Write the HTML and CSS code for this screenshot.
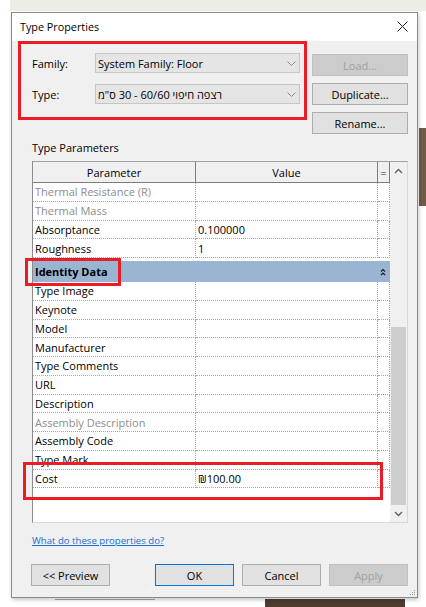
FILE: index.html
```html
<!DOCTYPE html>
<html>
<head>
<meta charset="utf-8">
<title>Type Properties</title>
<link rel="stylesheet" href="styles.css">
</head>
<body>
<div class="desk">
  <div class="strip-top"></div>
  <div class="brown-right"></div>
  <div class="brown-bottom"></div>
  <div class="line-bottom"></div>

  <div class="dialog">
    <div class="titlebar">
      <span class="title">Type Properties</span>
      <svg class="close" width="11" height="11" viewBox="0 0 11 11"><path d="M0.5 0.5 L10.5 10.5 M10.5 0.5 L0.5 10.5" stroke="#1a1a1a" stroke-width="1" fill="none"/></svg>
    </div>
    <div class="dbody">
      <div class="top">
        <div class="fields">
          <div class="field">
            <span class="lbl">Family:</span>
            <div class="combo"><span class="ctext">System Family: Floor</span><svg class="chev" width="9" height="5" viewBox="0 0 9 5"><path d="M0.5 0.5 L4.5 4.5 L8.5 0.5" fill="none" stroke="#8a8a8a" stroke-width="1"/></svg></div>
          </div>
          <div class="field">
            <span class="lbl">Type:</span>
            <div class="combo"><span class="ctext" dir="rtl">רצפה חיפוי 60/60 - 30 ס"מ</span><svg class="chev" width="9" height="5" viewBox="0 0 9 5"><path d="M0.5 0.5 L4.5 4.5 L8.5 0.5" fill="none" stroke="#8a8a8a" stroke-width="1"/></svg></div>
          </div>
        </div>
        <div class="side">
          <button class="btn disabled">Load...</button>
          <button class="btn">Duplicate...</button>
          <button class="btn">Rename...</button>
        </div>
      </div>

      <div class="section-label">Type Parameters</div>

      <div class="grid">
        <div class="table">
          <div class="row head"><div class="c c1">Parameter</div><div class="c c2">Value</div><div class="c c3">=</div></div>
          <div class="row"><div class="c c1 dim">Thermal Resistance (R)</div><div class="c c2"></div><div class="c c3"></div></div>
          <div class="row"><div class="c c1 dim">Thermal Mass</div><div class="c c2"></div><div class="c c3"></div></div>
          <div class="row"><div class="c c1">Absorptance</div><div class="c c2">0.100000</div><div class="c c3"></div></div>
          <div class="row"><div class="c c1">Roughness</div><div class="c c2">1</div><div class="c c3"></div></div>
          <div class="group"><span>Identity Data</span><svg class="gicon" width="6" height="8" viewBox="0 0 6 8"><path d="M1 3.5 L3 1.5 L5 3.5 M1 7 L3 5 L5 7" fill="none" stroke="#1e1e1e" stroke-width="1.2"/></svg></div>
          <div class="row"><div class="c c1">Type Image</div><div class="c c2"></div><div class="c c3"></div></div>
          <div class="row"><div class="c c1">Keynote</div><div class="c c2"></div><div class="c c3"></div></div>
          <div class="row"><div class="c c1">Model</div><div class="c c2"></div><div class="c c3"></div></div>
          <div class="row"><div class="c c1">Manufacturer</div><div class="c c2"></div><div class="c c3"></div></div>
          <div class="row"><div class="c c1">Type Comments</div><div class="c c2"></div><div class="c c3"></div></div>
          <div class="row"><div class="c c1">URL</div><div class="c c2"></div><div class="c c3"></div></div>
          <div class="row"><div class="c c1">Description</div><div class="c c2"></div><div class="c c3"></div></div>
          <div class="row"><div class="c c1 dim">Assembly Description</div><div class="c c2"></div><div class="c c3"></div></div>
          <div class="row"><div class="c c1">Assembly Code</div><div class="c c2"></div><div class="c c3"></div></div>
          <div class="row"><div class="c c1">Type Mark</div><div class="c c2"></div><div class="c c3"></div></div>
          <div class="row"><div class="c c1">Cost</div><div class="c c2">₪100.00</div><div class="c c3"></div></div>
          <div class="fill"></div>
        </div>
        <div class="scroll">
          <div class="arrow up"><svg width="9" height="6" viewBox="0 0 9 6"><path d="M1 5 L4.5 1.5 L8 5" fill="none" stroke="#606060" stroke-width="1.4"/></svg></div>
          <div class="track"><div class="thumb"></div></div>
          <div class="arrow down"><svg width="9" height="6" viewBox="0 0 9 6"><path d="M1 1 L4.5 4.5 L8 1" fill="none" stroke="#606060" stroke-width="1.4"/></svg></div>
        </div>
      </div>

      <a class="help" href="#">What do these properties do?</a>

      <div class="actions">
        <button class="btn wide preview">&lt;&lt; Preview</button>
        <button class="btn wide ok">OK</button>
        <button class="btn wide">Cancel</button>
        <button class="btn wide disabled">Apply</button>
      </div>
    </div>
    <svg class="grip" width="7" height="7" viewBox="0 0 7 7"><g fill="#9a9a9a"><rect x="5" y="1" width="1" height="1"/><rect x="3" y="3" width="1" height="1"/><rect x="5" y="3" width="1" height="1"/><rect x="1" y="5" width="1" height="1"/><rect x="3" y="5" width="1" height="1"/><rect x="5" y="5" width="1" height="1"/></g></svg>
  </div>

  <div class="mark mark-top"></div>
  <div class="mark mark-group"></div>
  <div class="mark mark-cost"></div>
</div>
</body>
</html>
```

FILE: styles.css
```css
* { box-sizing: border-box; }
html, body { margin: 0; padding: 0; background: #ffffff; }
body {
  font-family: "Open Sans", "Noto Sans", sans-serif;
  font-size: 11px;
  color: #000;
}
.desk {
  position: relative;
  width: 426px;
  height: 607px;
  overflow: hidden;
  padding: 12px 0 0 11px;
}
.strip-top { position: absolute; left: 10px; top: 0; width: 416px; height: 11px; background: #eaeee5; }
.brown-right { position: absolute; left: 419px; top: 128px; width: 7px; height: 78px; background: #6f5b46; }
.brown-bottom { position: absolute; left: 265px; top: 599px; width: 140px; height: 8px; background: #4e3b2d; }
.line-bottom { position: absolute; left: 55px; top: 599px; width: 100px; height: 1px; background: #a8a8a8; }

.dialog {
  position: relative;
  width: 407px;
  height: 586px;
  border: 1px solid #8a8a8a;
  background: #f0f0f0;
  box-shadow: 1px 2px 4px rgba(0,0,0,0.22);
  display: flex;
  flex-direction: column;
}
.titlebar {
  height: 28px;
  background: #ffffff;
  display: flex;
  align-items: center;
  padding-left: 8px;
  flex: none;
}
.title { font-size: 10.8px; line-height: 14px; }
.close { margin-left: auto; margin-right: 9px; margin-top: -1px; }

.dbody {
  flex: 1;
  padding: 12px 9px 0 20px;
  display: flex;
  flex-direction: column;
}
.top { display: flex; justify-content: space-between; align-items: flex-start; }
.fields { display: flex; flex-direction: column; gap: 11px; width: 268px; }
.field { display: flex; align-items: center; height: 20px; }
.lbl { width: 63px; }
.combo {
  width: 205px;
  height: 20px;
  background: #e5e5e5;
  border: 1px solid #c6c6c6;
  display: flex;
  align-items: center;
  padding-left: 2px;
}
.ctext { white-space: nowrap; }
.chev { margin-left: auto; margin-right: 3px; }

.side { width: 96px; display: flex; flex-direction: column; gap: 7px; margin-top: 1px; }
.btn {
  height: 22px;
  background: #e1e1e1;
  border: 1px solid #adadad;
  font-family: inherit;
  font-size: 11px;
  color: #000;
  padding: 0;
  margin: 0;
}
.btn.disabled { background: #cccccc; border-color: #bfbfbf; color: #a0a0a0; }

.section-label { margin-top: 7px; line-height: 14px; }

.grid {
  margin-top: 6px;
  height: 362px;
  display: flex;
  border-top: 1px solid #a0a0a0;
  border-left: 1px solid #8c8c8c;
  border-right: 1px solid #d8d8d8;
  border-bottom: 1px solid #d8d8d8;
  flex: none;
}
.table { width: 357px; display: flex; flex-direction: column; background: #fff; }
.row {
  display: grid;
  grid-template-columns: 163px 182px 12px;
  height: 18.75px;
  flex: none;
}
.c {
  display: flex;
  align-items: center;
  padding-left: 2px;
  white-space: nowrap;
  overflow: hidden;
  border-bottom: 1px dotted #a8a8a8;
  border-right: 1px dotted #a8a8a8;
}
.dim { color: #8d8d8d; }
.row.head { height: 21px; background: #f0f0f0; }
.row.head .c {
  justify-content: center;
  padding-left: 0;
  border-bottom: 1px solid #7d7d7d;
  border-right: 1px solid #7d7d7d;
}
.row.head .c3 { color: #333; }
.group {
  height: 24px;
  flex: none;
  border-top: 3px solid #fff;
  background: #9ab5d2;
  display: flex;
  align-items: center;
  padding-left: 2px;
  font-weight: 700;
}
.gicon { margin-left: auto; margin-right: 4px; }
.fill { flex: 1; background: #fff; }

.scroll { width: 17px; display: flex; flex-direction: column; background: #f0f0f0; }
.arrow { display: flex; align-items: center; justify-content: center; flex: none; }
.arrow.up { height: 18px; }
.arrow.down { height: 17px; }
.track { flex: 1; display: flex; flex-direction: column; justify-content: flex-end; }
.thumb { height: 178px; background: #cdcdcd; margin: 0 1px 0 1px; }

.help {
  margin-top: 11px;
  line-height: 14px;
  font-size: 9.6px;
  color: #1a6fd1;
  text-decoration: underline;
  align-self: flex-start;
}
.actions { margin-top: 16px; display: flex; gap: 8px; }
.btn.wide { width: 79px; }
.btn.preview { margin-left: -1px; margin-right: auto; }
.btn.ok { border-color: #0078d7; }

.grip { position: absolute; right: 1px; bottom: 1px; }

.mark { position: absolute; border: 3px solid #ec1c24; }
.mark-top { left: 18px; top: 41px; width: 289px; height: 79px; }
.mark-group { left: 25px; top: 258px; width: 96px; height: 28px; }
.mark-cost { left: 23px; top: 462px; width: 360px; height: 38px; }
```
